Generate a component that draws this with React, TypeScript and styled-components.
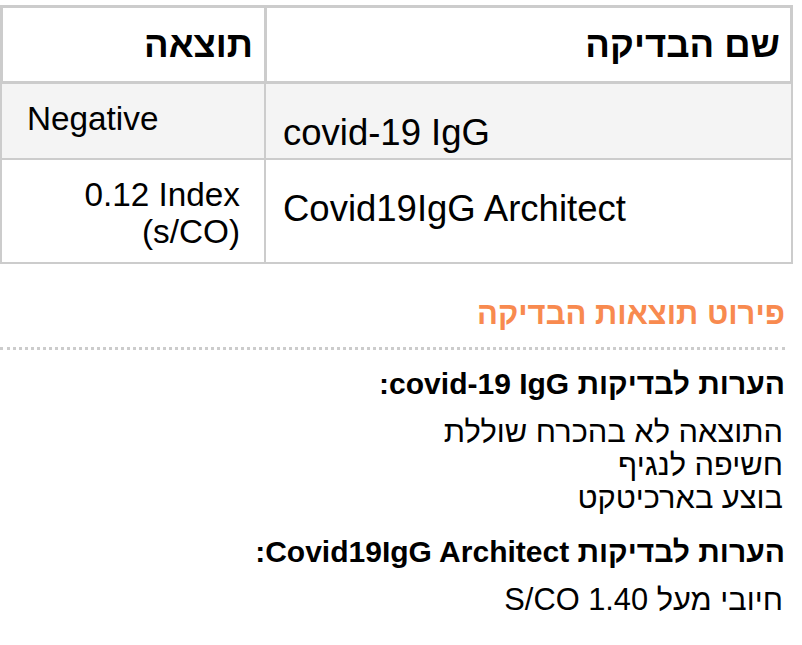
import React from "react";
import styled, { createGlobalStyle } from "styled-components";

const Global = createGlobalStyle`
  html, body { margin: 0; padding: 0; background: #fff; }
  body { font-family: "Liberation Sans", Arial, sans-serif; color: #000; }
`;

const Page = styled.div`
  direction: rtl;
  padding-top: 5px;
`;

const Table = styled.table`
  width: 793px;
  table-layout: fixed;
  border-collapse: separate;
  border-spacing: 0;
  margin-right: 9px;
`;

const HeadCell = styled.th<{ $first?: boolean }>`
  height: 73px;
  padding: 0 ${(p) => (p.$first ? 10 : 11)}px 0 0;
  text-align: right;
  vertical-align: middle;
  font-size: 36.5px;
  font-weight: bold;
  border-top: 3px solid #cccccc;
  border-bottom: 3px solid #cccccc;
  border-left: 3px solid #cccccc;
  border-right: ${(p) => (p.$first ? "3px solid #cccccc" : "0")};
`;

const Row = styled.tr<{ $shade?: boolean }>`
  background: ${(p) => (p.$shade ? "#f4f4f4" : "#ffffff")};
`;

const NameCell = styled.td`
  direction: ltr;
  text-align: left;
  vertical-align: top;
  padding: 28px 12px 5px 17px;
  font-size: 36.5px;
  line-height: 41px;
  border-bottom: 2px solid #cccccc;
  border-left: 2px solid #cccccc;
  border-right: 2px solid #cccccc;
`;

const ResultCell = styled.td<{ $align: "left" | "right" }>`
  direction: ltr;
  text-align: ${(p) => p.$align};
  vertical-align: top;
  padding: 16px 22px 12px 27px;
  font-size: 33.3px;
  line-height: 37px;
  border-bottom: 2px solid #cccccc;
  border-left: 2px solid #cccccc;
`;

const Details = styled.section`
  margin: 0 17px 0 0;
  padding-top: 33px;
`;

const Title = styled.h2`
  margin: 0;
  color: #f88a4f;
  font-size: 31px;
  line-height: 34px;
  font-weight: bold;
  padding-bottom: 16px;
  border-bottom: 3px dotted #cccccc;
`;

const NoteBlock = styled.div`
  padding-top: 18px;
  & + & {
    padding-top: 22px;
  }
`;

const NoteHeading = styled.div`
  font-size: 30px;
  line-height: 32px;
  font-weight: bold;
  margin-bottom: 15px;
`;

const NoteLine = styled.div`
  font-size: 30.8px;
  line-height: 33px;
  margin-right: 2px;
`;

export default function App() {
  return (
    <>
      <Global />
      <Page>
        <Table>
          <colgroup>
            <col style={{ width: 529 }} />
            <col style={{ width: 264 }} />
          </colgroup>
          <thead>
            <tr>
              <HeadCell $first>שם הבדיקה</HeadCell>
              <HeadCell>תוצאה</HeadCell>
            </tr>
          </thead>
          <tbody>
            <Row $shade>
              <NameCell>covid-19 IgG</NameCell>
              <ResultCell $align="left">Negative</ResultCell>
            </Row>
            <Row>
              <NameCell>Covid19IgG Architect</NameCell>
              <ResultCell $align="right">
                0.12 Index
                <br />
                (s/CO)
              </ResultCell>
            </Row>
          </tbody>
        </Table>
        <Details>
          <Title>פירוט תוצאות הבדיקה</Title>
          <NoteBlock>
            <NoteHeading>הערות לבדיקות covid-19 IgG:</NoteHeading>
            <NoteLine>התוצאה לא בהכרח שוללת</NoteLine>
            <NoteLine>חשיפה לנגיף</NoteLine>
            <NoteLine>בוצע בארכיטקט</NoteLine>
          </NoteBlock>
          <NoteBlock>
            <NoteHeading>הערות לבדיקות Covid19IgG Architect:</NoteHeading>
            <NoteLine>חיובי מעל S/CO 1.40</NoteLine>
          </NoteBlock>
        </Details>
      </Page>
    </>
  );
}
